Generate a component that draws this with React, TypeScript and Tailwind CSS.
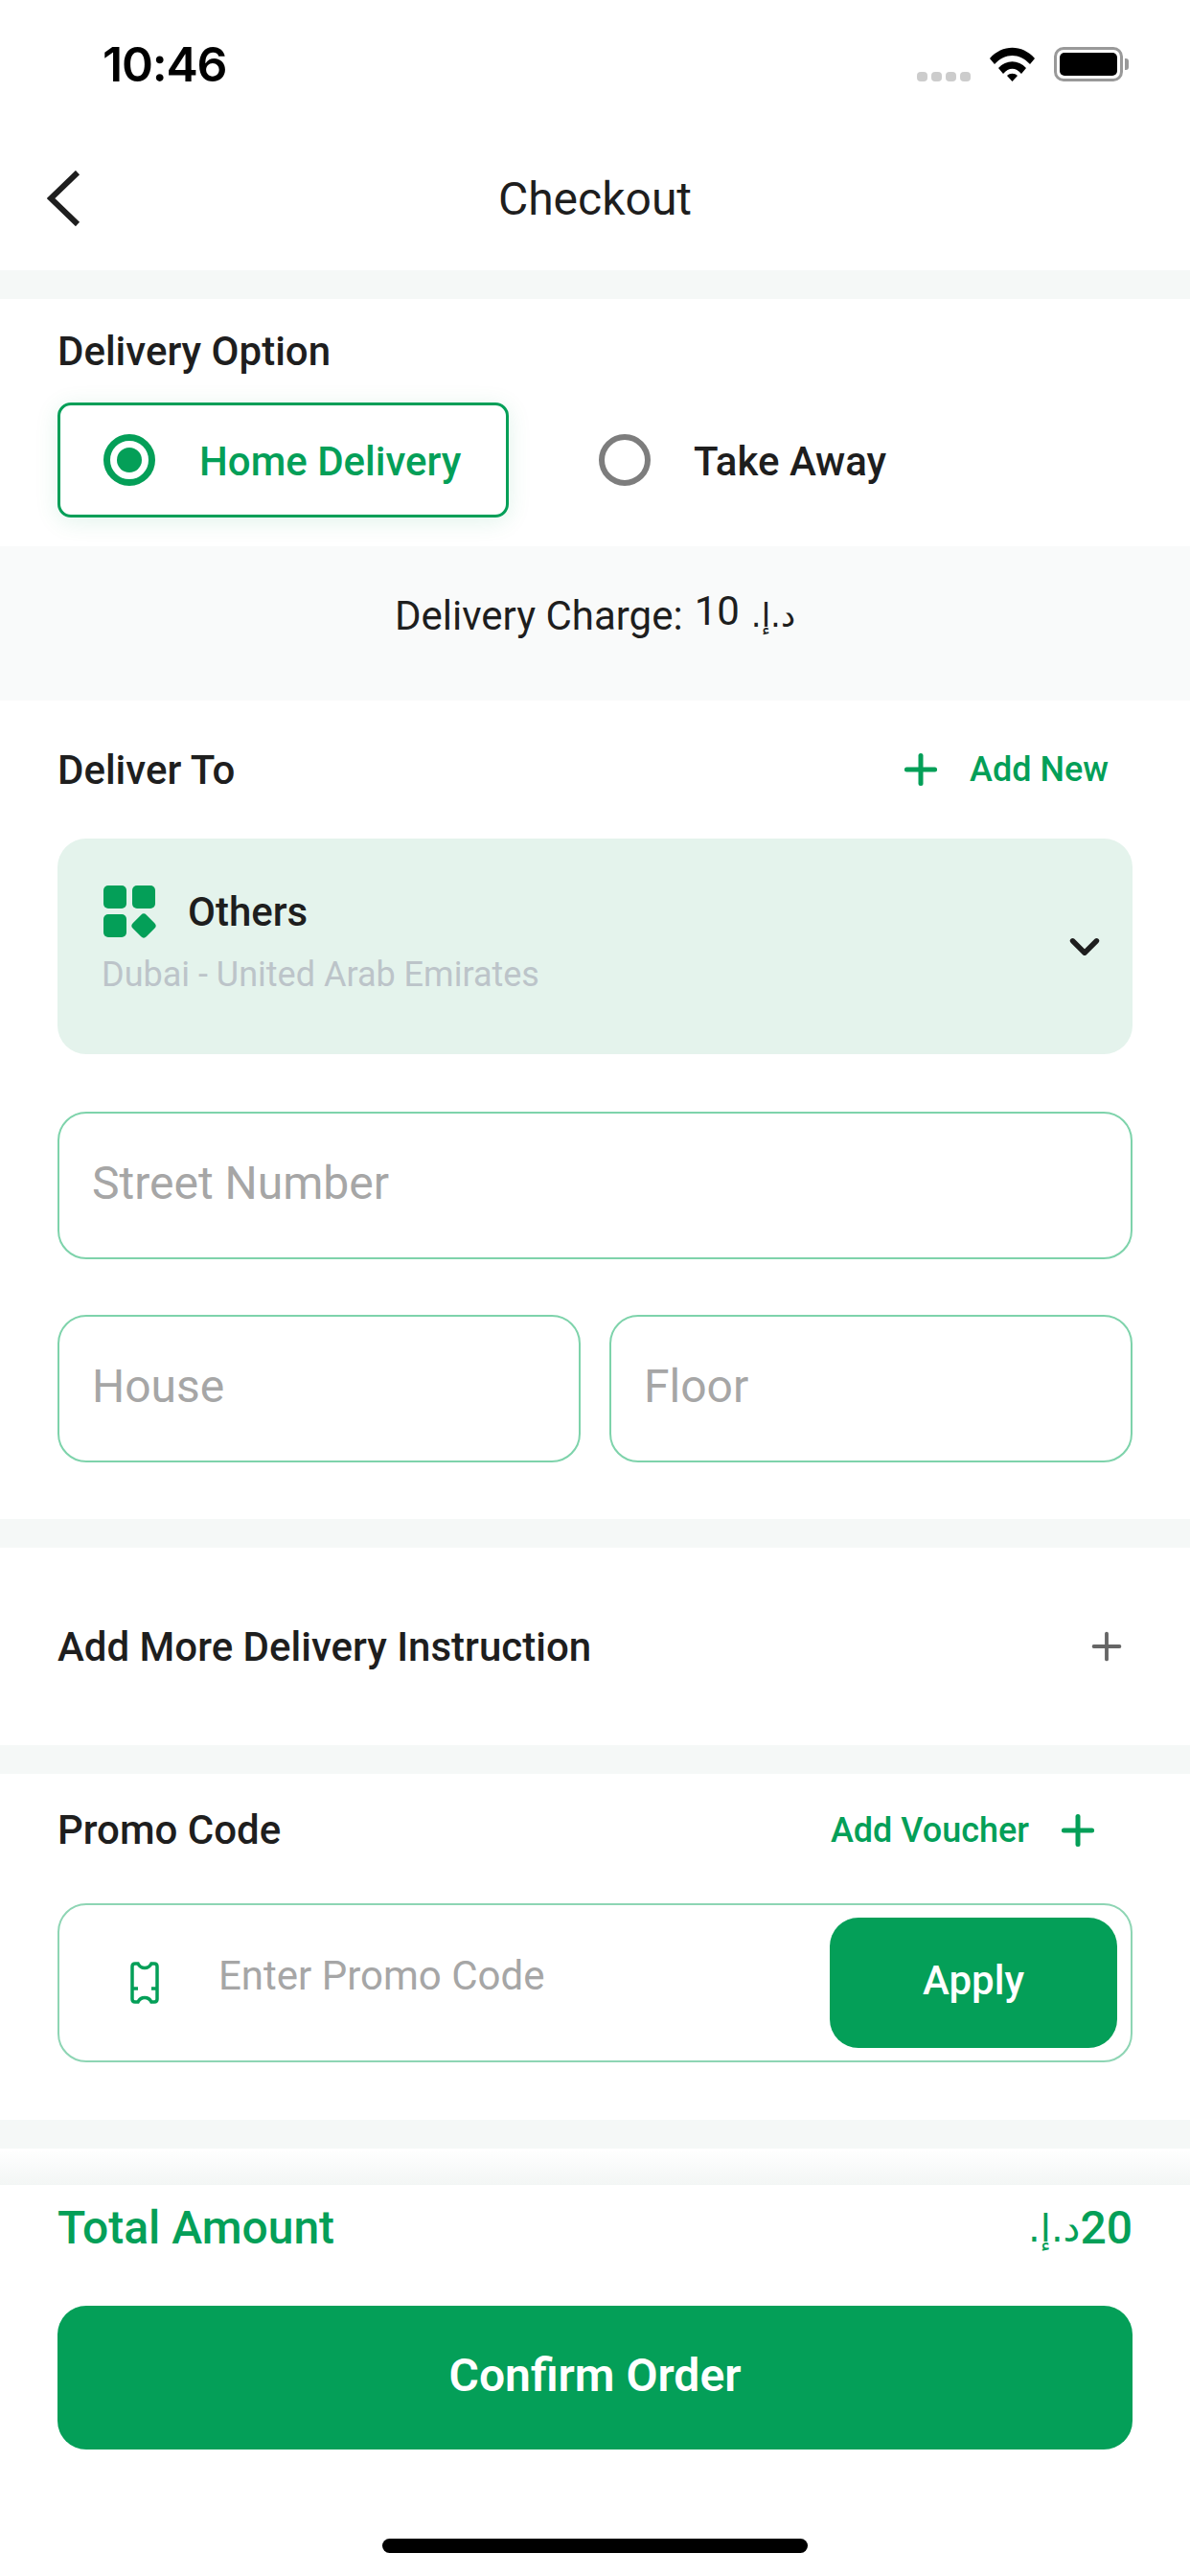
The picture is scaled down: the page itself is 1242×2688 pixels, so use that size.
import { ChevronDown, Plus } from "lucide-react";

const GREEN = "#049f58";

function Band() {
  return <div className="h-[30px] shrink-0 bg-[#f5f8f7]" />;
}

function StatusBar() {
  return (
    <div className="flex h-[135px] shrink-0 items-start justify-between pl-[107px] pr-[64px] pt-[37px]">
      <span className="font-['Inter',sans-serif] text-[50px] leading-[60px] font-semibold tracking-[-1.2px] text-black">
        10:46
      </span>
      <div className="flex items-start pt-[12px]">
        <div className="mt-[26px] flex gap-[4px]">
          {[0, 1, 2, 3].map((i) => (
            <div key={i} className="h-[10px] w-[11px] rounded-[4px] bg-[#cccccc]" />
          ))}
        </div>
        <svg className="ml-[20px]" width="47" height="36" viewBox="0 0 47 36" fill="none">
          <path d="M0 12 C13 -3 34 -3 47 12 L42 18 C31 6 16 6 5 18 Z" fill="#000" />
          <path d="M9 22 C17 13 30 13 38 22 L33 28 C27 21 20 21 14 28 Z" fill="#000" />
          <path d="M18 30 C21 27 26 27 29 30 L23.5 36 Z" fill="#000" />
        </svg>
        <div className="ml-[20px] flex items-center">
          <div className="h-[36px] w-[72px] rounded-[10px] border-[3px] border-[#999999] p-[3px]">
            <div className="h-full w-full rounded-[5px] bg-black" />
          </div>
          <div className="ml-[2px] h-[12px] w-[4px] rounded-r-[3px] bg-[#999999]" />
        </div>
      </div>
    </div>
  );
}

function TicketIcon() {
  return (
    <svg width="30" height="44" viewBox="0 0 30 44" fill="none" stroke={GREEN} strokeWidth="3.5">
      <path d="M5 2 H8 C11 8 19 8 22 2 H25 C27 2 28 3 28 5 V39 C28 41 27 42 25 42 H22 C19 36 11 36 8 42 H5 C3 42 2 41 2 39 V5 C2 3 3 2 5 2 Z" />
      <path d="M2 28 H8 M22 28 H28" />
    </svg>
  );
}

function Field({ label, className }: { label: string; className?: string }) {
  return (
    <div
      className={`flex h-[154px] items-center rounded-[30px] border-[2px] border-[#7ed3ab] pb-[5px] pl-[34px] text-[48px] text-[#a6a6a6] ${className ?? ""}`}
    >
      {label}
    </div>
  );
}

export default function App() {
  return (
    <div className="flex h-[2688px] w-[1242px] flex-col overflow-hidden bg-white font-['Roboto',sans-serif] text-[#1e1e1e]">
      <StatusBar />

      <div className="relative flex h-[147px] shrink-0 items-center justify-center pb-[1px]">
        <svg className="absolute left-[49px] top-[43px]" width="36" height="58" viewBox="0 0 36 58" fill="none">
          <path d="M32 2 L4 29 L32 56" stroke="#1e1e1e" strokeWidth="6" />
        </svg>
        <span className="text-[48px]">Checkout</span>
      </div>
      <Band />

      <section className="flex h-[258px] shrink-0 flex-col px-[60px] pt-[32px]">
        <h2 className="text-[42px] leading-[46px] font-medium">Delivery Option</h2>
        <div className="mt-[30px] flex items-center">
          <div className="flex h-[120px] w-[471px] items-center rounded-[14px] border-[3px] border-[#049f58] pl-[45px] shadow-[0_4px_24px_rgba(4,159,88,0.12)]">
            <div className="flex h-[54px] w-[54px] items-center justify-center rounded-full border-[7px] border-[#049f58]">
              <div className="h-[26px] w-[26px] rounded-full bg-[#049f58]" />
            </div>
            <span className="ml-[46px] mt-[2px] text-[42px] font-medium text-[#049f58]">Home Delivery</span>
          </div>
          <div className="ml-[94px] h-[54px] w-[54px] rounded-full border-[6px] border-[#7d7d7d]" />
          <span className="ml-[45px] mt-[2px] text-[42px] font-medium">Take Away</span>
        </div>
      </section>

      <div className="flex h-[161px] shrink-0 items-center justify-center bg-[#f9fafa] pb-[16px] text-[42px]">
        <span>Delivery Charge:</span>
        <span className="ml-[12px] mb-[10px]">10</span>
        <span dir="rtl" className="ml-[12px] font-['DejaVu_Sans',sans-serif] text-[34px]">
          د.إ.
        </span>
      </div>

      <section className="flex h-[854px] shrink-0 flex-col px-[60px]">
        <div className="flex h-[144px] shrink-0 items-center justify-between">
          <h2 className="text-[42px] font-medium">Deliver To</h2>
          <div className="mr-[25px] flex items-center text-[36px] font-medium text-[#049f58]">
            <Plus size={50} strokeWidth={2.4} />
            <span className="ml-[26px]">Add New</span>
          </div>
        </div>
        <div className="flex h-[225px] shrink-0 items-center justify-between rounded-[30px] bg-[#e4f3ec] pl-[46px] pr-[25px]">
          <div className="mb-[12px]">
            <div className="flex items-center">
              <svg width="58" height="58" viewBox="0 0 58 58" fill={GREEN}>
                <rect x="2" y="2" width="24" height="24" rx="5" />
                <rect x="32" y="2" width="24" height="24" rx="5" />
                <rect x="2" y="32" width="24" height="24" rx="5" />
                <rect x="34" y="34" width="20" height="20" rx="4" transform="rotate(45 44 44)" />
              </svg>
              <span className="ml-[32px] text-[42px] font-medium">Others</span>
            </div>
            <div className="mt-[7px] text-[36px] text-[#bcc4c9]">Dubai - United Arab Emirates</div>
          </div>
          <ChevronDown size={50} strokeWidth={2.6} />
        </div>
        <Field label="Street Number" className="mt-[60px]" />
        <div className="mt-[58px] grid grid-cols-2 gap-[30px]">
          <Field label="House" />
          <Field label="Floor" />
        </div>
      </section>
      <Band />

      <section className="flex h-[206px] shrink-0 items-center justify-between pl-[60px] pr-[64px]">
        <h2 className="text-[42px] font-medium">Add More Delivery Instruction</h2>
        <Plus size={46} strokeWidth={2} className="text-[#666666]" />
      </section>
      <Band />

      <section className="flex h-[361px] shrink-0 flex-col px-[60px]">
        <div className="flex h-[117px] shrink-0 items-center justify-between">
          <h2 className="text-[42px] font-medium">Promo Code</h2>
          <div className="mr-[32px] flex items-center text-[36px] font-medium text-[#049f58]">
            <span>Add Voucher</span>
            <Plus size={50} strokeWidth={2.4} className="ml-[26px]" />
          </div>
        </div>
        <div className="mt-[18px] flex h-[166px] items-center rounded-[30px] border-[2px] border-[#8ed5b4] pl-[74px] pr-[14px]">
          <TicketIcon />
          <span className="ml-[62px] mb-[16px] flex-1 text-[42px] text-[#a6a6a6]">Enter Promo Code</span>
          <button className="flex h-[136px] w-[300px] items-center justify-center rounded-[30px] bg-[#049f58] pb-[5px] text-[42px] font-medium text-white">
            Apply
          </button>
        </div>
      </section>
      <Band />

      <div className="h-[38px] shrink-0 bg-gradient-to-b from-white to-[#f3f6f5]" />

      <footer className="flex flex-1 flex-col px-[60px]">
        <div className="mt-[19px] flex h-[52px] items-center justify-between text-[48px] font-medium text-[#049f58]">
          <span>Total Amount</span>
          <div className="flex items-center">
            <span dir="rtl" className="font-['DejaVu_Sans',sans-serif] text-[40px]">
              د.إ.
            </span>
            <span>20</span>
          </div>
        </div>
        <button className="mt-[55px] flex h-[150px] w-full items-center justify-center rounded-[30px] bg-[#049f58] pb-[4px] text-[48px] font-semibold text-white">
          Confirm Order
        </button>
        <div className="mx-auto mt-[93px] h-[15px] w-[444px] rounded-full bg-black" />
      </footer>
    </div>
  );
}
